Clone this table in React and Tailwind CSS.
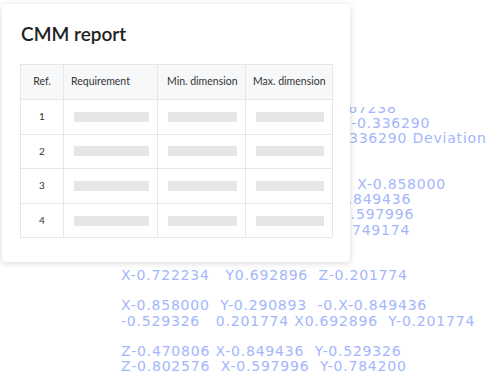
import React from 'react';

const rows = [1, 2, 3, 4];

// coordinate dump drawn behind the report card
const coordLines = [
  { text: 'Y-0.867238', indent: 'ml-[310px]' },
  { text: 'Z-0.336290', indent: 'ml-[341px]' },
  { text: '0.336290 Deviation', indent: 'ml-[334px]' },
  { text: '' },
  { text: '' },
  { text: '0  X-0.858000', indent: 'ml-[337px]' },
  { text: '0.849436', indent: 'ml-[338px]' },
  { text: '0.597996', indent: 'ml-[341px]' },
  { text: '0.749174', indent: 'ml-[337px]' },
  { text: '' },
  { text: '' },
  { text: 'X-0.722234   Y0.692896  Z-0.201774', indent: 'ml-[121px]' },
  { text: '' },
  { text: 'X-0.858000  Y-0.290893  -0.X-0.849436', indent: 'ml-[121px]' },
  { text: '-0.529326   0.201774 X0.692896  Y-0.201774', indent: 'ml-[121px]' },
  { text: '' },
  { text: 'Z-0.470806 X-0.849436  Y-0.529326', indent: 'ml-[121px]' },
  { text: 'Z-0.802576  X-0.597996  Y-0.784200', indent: 'ml-[121px]' },
];

const Bar = ({ w }) => <div className={`h-[10px] bg-[#e6e6e6] ${w}`}></div>;

export default function App() {
  return (
    <div className="relative w-[490px] h-[374px] overflow-hidden bg-white">
      {/* Background coordinates */}
      <div className="pt-[107px] h-full">
        <div className="h-full overflow-hidden">
          <div className="-mt-[6px] text-[14px] leading-[15.2px] tracking-[0.8px] text-[#a3b6fc] whitespace-pre" style={{ fontFamily: '"DejaVu Sans", sans-serif' }}>
            {coordLines.map((l, i) => (
              <div key={i} className={`h-[15.2px] ${l.indent || ''}`}>{l.text}</div>
            ))}
          </div>
        </div>
      </div>

      {/* Report card */}
      <div
        className="absolute left-[2px] top-[4px] w-[348px] h-[258px] bg-white rounded-[4px] shadow-[0_1px_6px_rgba(0,0,0,0.16)] pt-[16px] px-[18px]"
        style={{ fontFamily: 'Lato, "Open Sans", sans-serif' }}
      >
        <h2 className="text-[19px] leading-[28px] font-semibold text-[#222] pl-[1px] mb-[16px]">CMM report</h2>

        <table className="border-collapse w-[312px] text-[10.5px] text-[#333] table-fixed whitespace-nowrap">
          <colgroup>
            <col className="w-[43px]" />
            <col className="w-[94px]" />
            <col className="w-[88px]" />
            <col className="w-[87px]" />
          </colgroup>
          <thead>
            <tr className="h-[35px] bg-[#f7f8fa]">
              <th className="border border-[#e6e6e6] font-normal text-center">Ref.</th>
              <th className="border border-[#e6e6e6] font-normal text-left pl-[7px]">Requirement</th>
              <th className="border border-[#e6e6e6] font-normal text-left pl-[9px]">Min. dimension</th>
              <th className="border border-[#e6e6e6] font-normal text-left pl-[7px]">Max. dimension</th>
            </tr>
          </thead>
          <tbody>
            {rows.map((n) => (
              <tr key={n} className="h-[34.6px]">
                <td className="border border-[#e6e6e6] text-center text-[10px]">{n}</td>
                <td className="border border-[#e6e6e6] pl-[10px]"><Bar w="w-[75px]" /></td>
                <td className="border border-[#e6e6e6] pl-[10px]"><Bar w="w-[69px]" /></td>
                <td className="border border-[#e6e6e6] pl-[10px]"><Bar w="w-[68px]" /></td>
              </tr>
            ))}
          </tbody>
        </table>
      </div>
    </div>
  );
}
